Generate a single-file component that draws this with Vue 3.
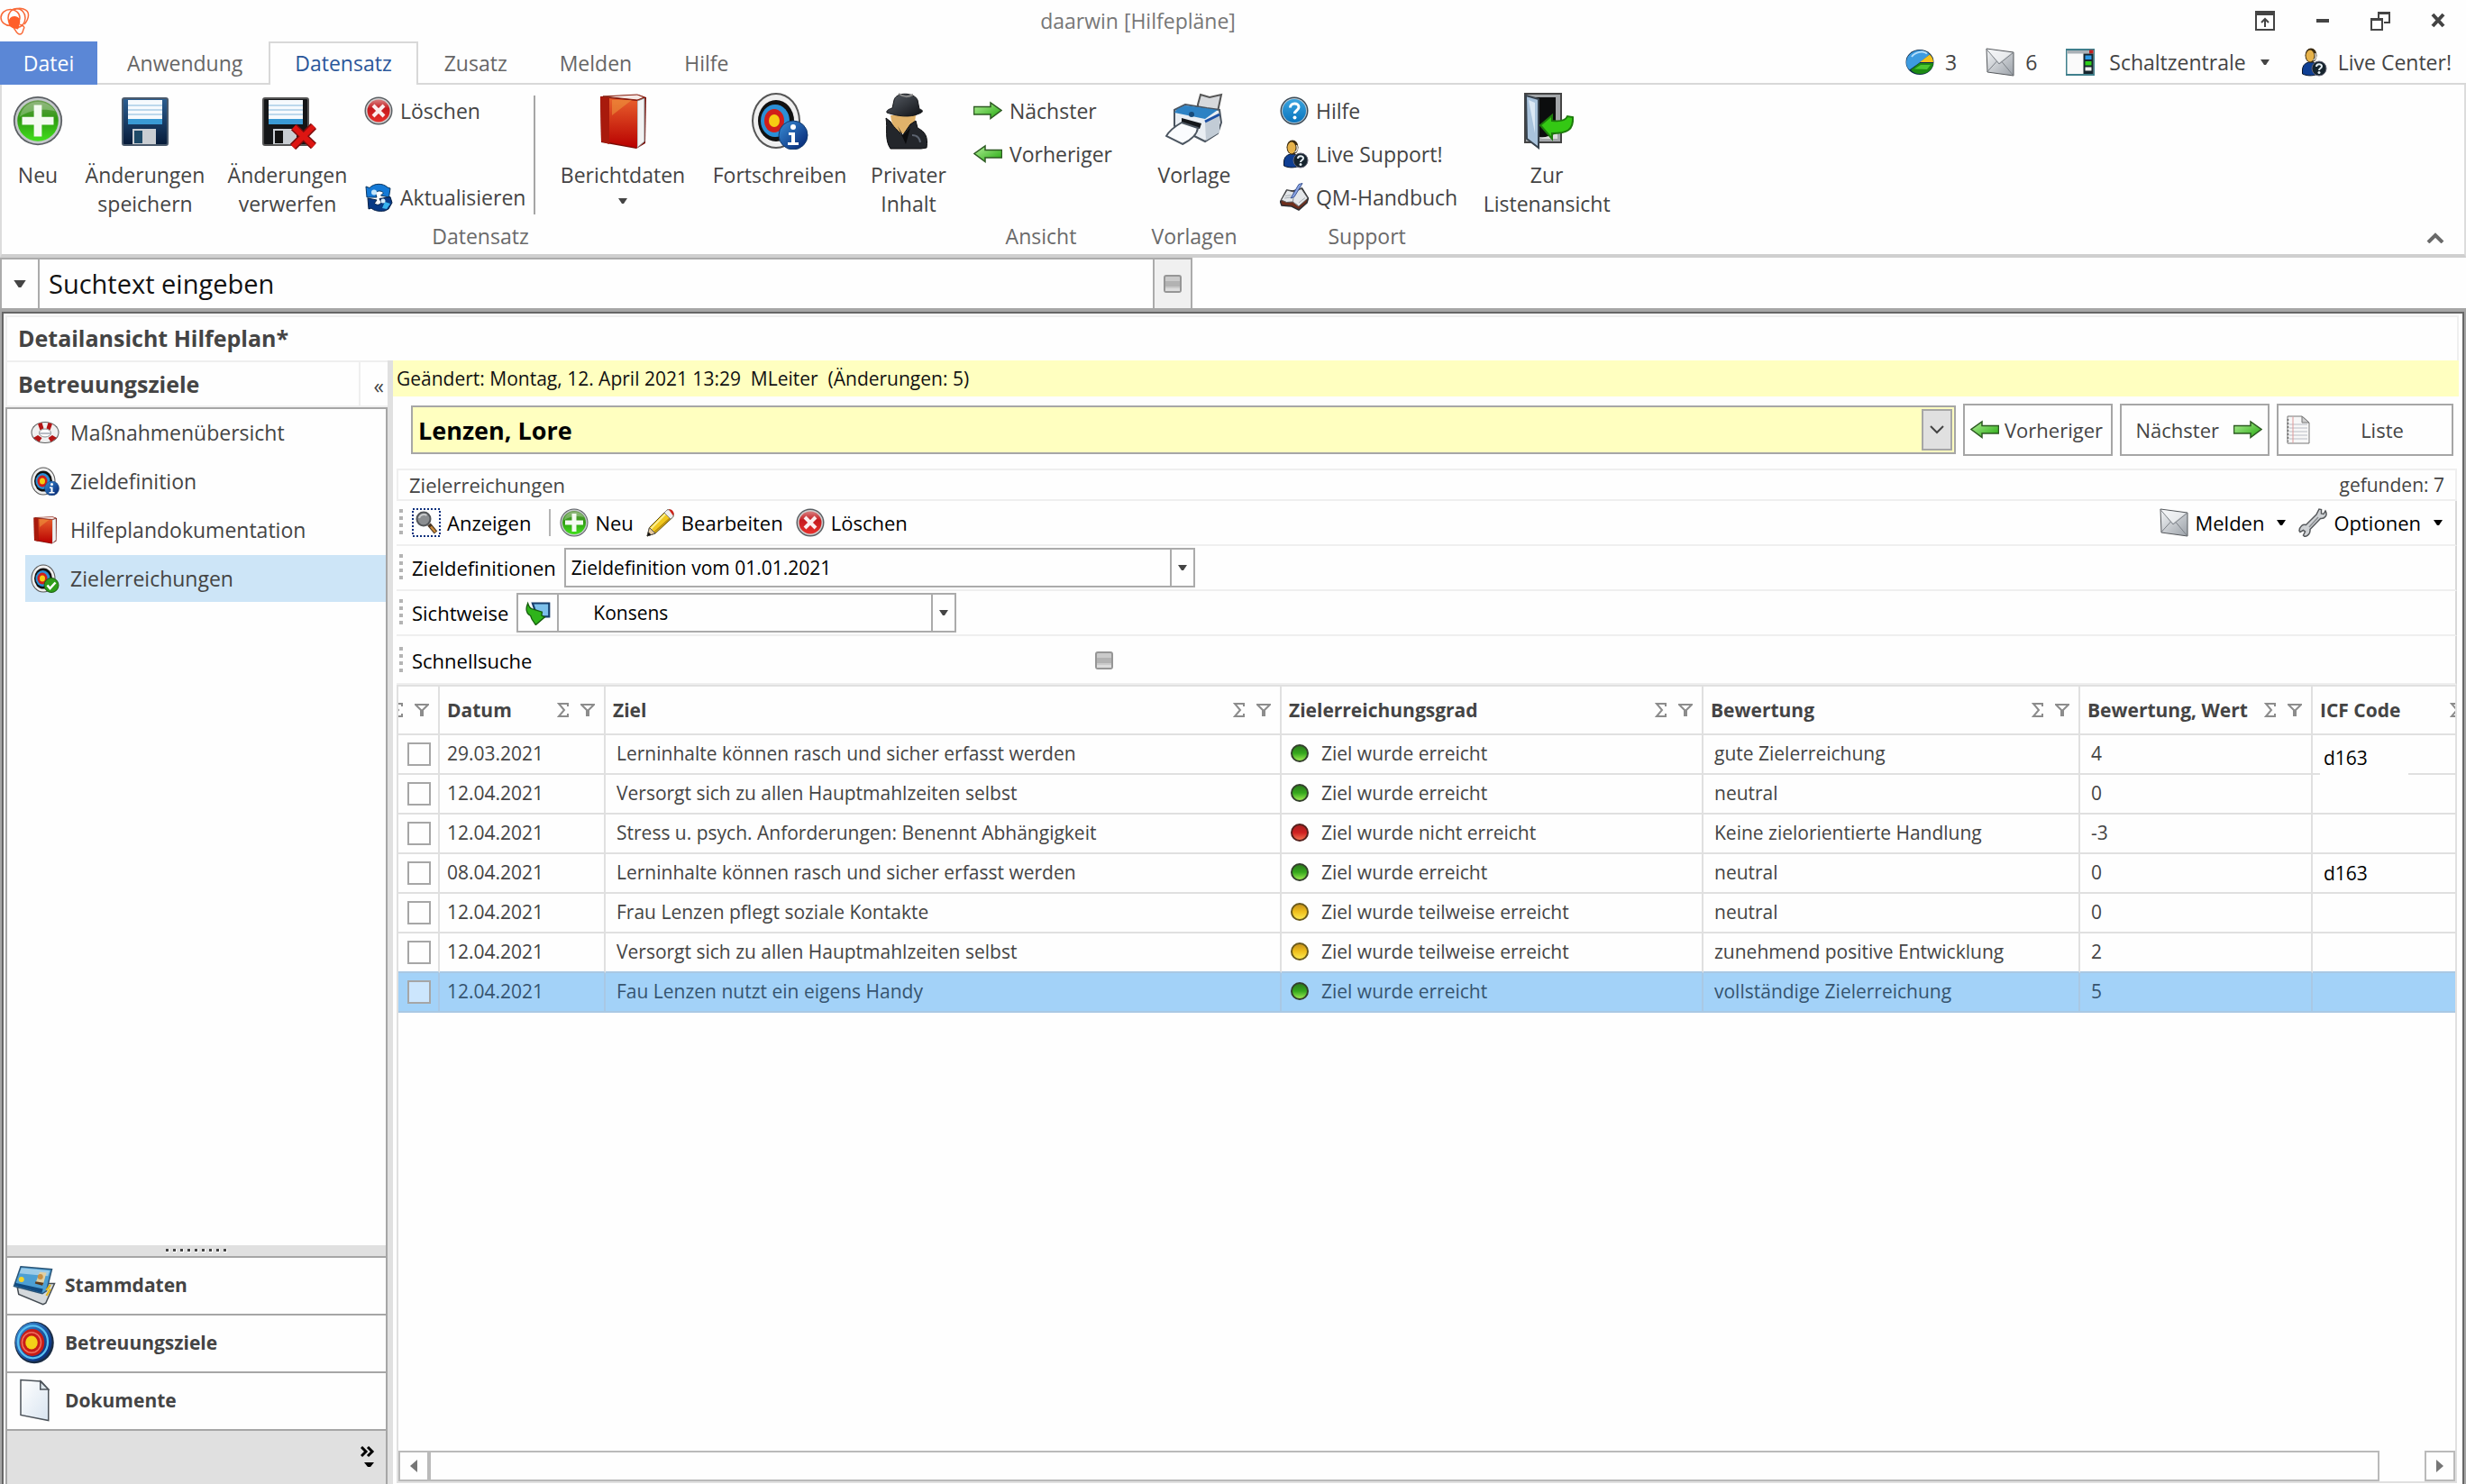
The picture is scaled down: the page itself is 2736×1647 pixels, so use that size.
<template>
  <div class="app">
    <!-- Symbole -->
    <svg class="sprite" aria-hidden="true">
      <defs>
        <linearGradient id="g-green" x1="0" y1="0" x2="0" y2="1">
          <stop offset="0" stop-color="#6f9e55" /><stop offset=".45" stop-color="#2f9a12" /><stop offset="1" stop-color="#41e01c" />
        </linearGradient>
        <linearGradient id="g-red" x1="0" y1="0" x2="0" y2="1">
          <stop offset="0" stop-color="#d98080" /><stop offset=".4" stop-color="#c41a1e" /><stop offset="1" stop-color="#e8302c" />
        </linearGradient>
        <linearGradient id="g-book" x1="0" y1="0" x2="0" y2="1">
          <stop offset="0" stop-color="#e8602c" /><stop offset="1" stop-color="#b80000" />
        </linearGradient>
        <linearGradient id="g-blue" x1="0" y1="0" x2="1" y2="1">
          <stop offset="0" stop-color="#3a8fd8" /><stop offset="1" stop-color="#02206e" />
        </linearGradient>
        <linearGradient id="g-sky" x1="0" y1="0" x2="0" y2="1">
          <stop offset="0" stop-color="#3aa4e0" /><stop offset="1" stop-color="#0a74bc" />
        </linearGradient>
        <linearGradient id="g-metal" x1="0" y1="0" x2="1" y2="1">
          <stop offset="0" stop-color="#f4f6f8" /><stop offset="1" stop-color="#9ba1a8" />
        </linearGradient>
        <linearGradient id="g-arrow" x1="0" y1="0" x2="1" y2="1">
          <stop offset="0" stop-color="#b4f09a" /><stop offset="1" stop-color="#22a80c" />
        </linearGradient>
        <linearGradient id="g-disk" x1="0" y1="0" x2="0" y2="1">
          <stop offset="0" stop-color="#2c5f92" /><stop offset="1" stop-color="#061a38" />
        </linearGradient>
        <linearGradient id="g-paper" x1="0" y1="0" x2="1" y2="1">
          <stop offset="0" stop-color="#ffffff" /><stop offset="1" stop-color="#d8e4f0" />
        </linearGradient>
        <linearGradient id="g-dark" x1="0" y1="0" x2="1" y2="1">
          <stop offset="0" stop-color="#5a6068" /><stop offset="1" stop-color="#0e1014" />
        </linearGradient>
      </defs>

      <symbol id="i-plus" viewBox="0 0 64 64">
        <circle cx="32" cy="32" r="31" fill="#5b5f63" /><circle cx="32" cy="32" r="29" fill="#c4c8cb" />
        <circle cx="32" cy="32" r="26" fill="url(#g-green)" />
        <path d="M9 27C12 14 22 8 32 8s18 5 22 12C40 16 22 18 9 27z" fill="#fff" opacity=".25" />
        <path d="M27 12h10v15h15v10H37v15H27V37H12V27h15z" fill="#f4fbf1" />
      </symbol>
      <symbol id="i-delete" viewBox="0 0 64 64">
        <circle cx="32" cy="32" r="31" fill="#5b5f63" /><circle cx="32" cy="32" r="28" fill="#cfcfcf" />
        <circle cx="32" cy="32" r="25" fill="url(#g-red)" />
        <path d="M20 20l24 24M44 20L20 44" stroke="#fbeeee" stroke-width="8" />
      </symbol>
      <symbol id="i-save" viewBox="0 0 64 64">
        <rect x="7" y="7" width="50" height="52" rx="2" fill="url(#g-disk)" stroke="#4a5a6c" stroke-width="2" />
        <rect x="13" y="9" width="38" height="27" fill="#f6fafd" />
        <path d="M13 15h38M13 20h38M13 25h38" stroke="#bcd8ec" stroke-width="2" />
        <rect x="13" y="30" width="38" height="6" fill="#3a9ad4" />
        <rect x="18" y="41" width="26" height="17" fill="#c9cdd2" /><rect x="20" y="43" width="9" height="14" fill="#1d4a68" />
      </symbol>
      <symbol id="i-discard" viewBox="0 0 64 64">
        <rect x="5" y="7" width="50" height="52" rx="2" fill="#141618" stroke="#555" stroke-width="2" />
        <rect x="11" y="9" width="38" height="27" fill="#f6fafd" />
        <path d="M11 15h38M11 20h38M11 25h38" stroke="#bcd8ec" stroke-width="2" />
        <rect x="11" y="30" width="38" height="6" fill="#3a9ad4" />
        <rect x="16" y="41" width="26" height="17" fill="#c9cdd2" /><rect x="18" y="43" width="9" height="14" fill="#111" />
        <path d="M39 39l22 21M61 38L38 61" stroke="#7c0d0d" stroke-width="9" />
        <path d="M39 39l22 21M61 38L38 61" stroke="#dd1512" stroke-width="6" />
      </symbol>
      <symbol id="i-refresh" viewBox="0 0 64 64">
        <path d="M4 8l8 3C22 0 42 0 52 10l6 2-3 20-18-4 6-6c-6-6-14-5-18 1l3 9H6z" fill="#1479d6" stroke="#0a3560" stroke-width="2" />
        <path d="M62 44l-8 14-8 4c-12 2-24 0-30-6l-6 2-2-24 20 4-5 7c6 6 12 4 15-2l-4-8 24-4z" fill="#083a86" stroke="#061f44" stroke-width="2" />
        <path d="M40 56l6-14 12 4-8 12z" fill="#37b2ee" />
        <circle cx="22" cy="21" r="6" fill="#c4e6fb" /><circle cx="42" cy="40" r="5" fill="#d6ecfa" />
      </symbol>
      <symbol id="i-book" viewBox="0 0 64 64">
        <path d="M7 5l42-2 9 3-1 51-10 6L8 56z" fill="#7a0d06" />
        <path d="M48 10l8-3v48l-8 7z" fill="#f2f2f2" stroke="#8a8a8a" />
        <path d="M7 5l10 1v52l-9-3z" fill="#a81a0c" />
        <path d="M17 7l31 3v52l-31-6z" fill="url(#g-book)" />
        <path d="M20 9h22L20 26z" fill="#f0a040" opacity=".5" />
        <path d="M10 5l38-2 8 3-8 3z" fill="#f6e8e4" stroke="#8a2010" />
      </symbol>
      <symbol id="i-target" viewBox="0 0 64 64">
        <ellipse cx="28" cy="32" rx="27" ry="31" fill="#555" /><ellipse cx="28" cy="32" rx="25" ry="29" fill="#efefef" />
        <ellipse cx="28" cy="32" rx="20" ry="23" fill="#111" /><ellipse cx="27" cy="32" rx="16" ry="18" fill="#2b8fd6" />
        <ellipse cx="26" cy="32" rx="11" ry="13" fill="#d11e1a" /><ellipse cx="26" cy="32" rx="6" ry="7" fill="#f6cc12" />
      </symbol>
      <symbol id="i-target-info" viewBox="0 0 64 64">
        <use href="#i-target" />
        <circle cx="47" cy="48" r="16" fill="url(#g-blue)" stroke="#123a6c" />
        <circle cx="47" cy="39" r="3" fill="#fff" /><path d="M42 45h7v11h4v3H41v-3h4v-8h-3z" fill="#fff" />
      </symbol>
      <symbol id="i-target-ok" viewBox="0 0 64 64">
        <use href="#i-target" />
        <circle cx="46" cy="47" r="16" fill="#2f9e1a" stroke="#1c5c10" stroke-width="2" />
        <path d="M37 47l6 7 12-13" fill="none" stroke="#fff" stroke-width="5" />
      </symbol>
      <symbol id="i-target-blue" viewBox="0 0 64 64">
        <ellipse cx="32" cy="32" rx="29" ry="31" fill="#1a2c44" /><ellipse cx="31" cy="31" rx="27" ry="29" fill="url(#g-blue)" />
        <ellipse cx="30" cy="31" rx="22" ry="24" fill="none" stroke="#58c0f2" stroke-width="3" />
        <ellipse cx="29" cy="32" rx="18" ry="20" fill="#c81c16" /><ellipse cx="28" cy="32" rx="14" ry="15" fill="none" stroke="#f07060" stroke-width="2" />
        <ellipse cx="28" cy="32" rx="9" ry="10" fill="#f4d018" />
      </symbol>
      <symbol id="i-agent" viewBox="0 0 64 64">
        <path d="M12 26c2 14 6 20 14 20s13-8 14-20z" fill="#e0b26a" />
        <path d="M7 29l5 4c5 9 9 9 13 16l9-13 6-4 2 8c8 4 12 9 10 22l-6 1H12C5 53 9 40 7 29z" fill="#23262b" stroke="#0a0b0d" />
        <path d="M20 38l6 10 8-8-5 18z" fill="#0b0c0e" /><path d="M36 48c4 0 8 2 9 8" fill="none" stroke="#5c6470" stroke-width="2" />
        <path d="M16 9c2-9 22-9 26 0l2 10c5 1 4 4 0 5-10 5-25 3-36-1-1-2 2-4 6-5z" fill="url(#g-dark)" stroke="#15171a" />
        <path d="M21 2c6 4 10 4 16 1" fill="none" stroke="#888" stroke-width="2" />
      </symbol>
      <symbol id="i-next" viewBox="0 0 64 64">
        <path d="M1 23h37V14l24 17-24 18v-9H1z" fill="url(#g-arrow)" stroke="#2d5a22" stroke-width="3" />
      </symbol>
      <symbol id="i-prev" viewBox="0 0 64 64">
        <path d="M63 23H26V14L2 31l24 18v-9h37z" fill="url(#g-arrow)" stroke="#2d5a22" stroke-width="3" />
      </symbol>
      <symbol id="i-printer" viewBox="0 0 64 64">
        <path d="M36 14l3-11 10 3 13-3-4 19-22-2z" fill="#d7d9dc" stroke="#555" stroke-width="2" />
        <path d="M10 20l12-6 24 4 14 2 2 14-4 12-14 9-16-8-18-9z" fill="#e9eef3" stroke="#4b5560" stroke-width="2" />
        <path d="M44 34l16-9v20l-15 9z" fill="#c2ccd6" />
        <path d="M13 19l9-4 36 5-14 10-34-7z" fill="#2d82c4" />
        <path d="M44 33l16-8" stroke="#1c50a4" stroke-width="3" />
        <path d="M18 29l22 6-2 6-20-6z" fill="#15181c" />
        <path d="M18 34l18 6c-1 8-7 13-17 18L1 49c4-7 10-11 17-15z" fill="#fafcfe" stroke="#4b5560" stroke-width="2" />
        <circle cx="29" cy="25" r="3" fill="#174a78" />
      </symbol>
      <symbol id="i-help" viewBox="0 0 64 64">
        <circle cx="32" cy="32" r="31" fill="#3c4a56" /><circle cx="32" cy="32" r="28" fill="#b9c8d2" />
        <circle cx="32" cy="32" r="26" fill="url(#g-sky)" />
        <path d="M23 25c0-12 19-12 19-1 0 7-9 7-9 14" fill="none" stroke="#fff" stroke-width="6" /><circle cx="33" cy="47" r="4" fill="#fff" />
      </symbol>
      <symbol id="i-person" viewBox="0 0 64 64">
        <path d="M9 50c0-12 8-18 18-18s16 6 18 14l-2 12c-12 6-26 4-34 0z" fill="#0f3f94" stroke="#08152c" stroke-width="2" />
        <ellipse cx="28" cy="17" rx="13" ry="16" fill="#3a2a10" /><ellipse cx="26" cy="18" rx="9" ry="13" fill="#e6b24a" />
        <path d="M37 12c3 6 2 14-4 16" fill="none" stroke="#ddd" stroke-width="3" />
        <circle cx="46" cy="46" r="16" fill="#16242e" stroke="#667" stroke-width="2" />
        <path d="M40 42c0-7 12-7 12-1 0 5-6 4-6 9" fill="none" stroke="#e6eef4" stroke-width="4" /><circle cx="46" cy="55" r="3" fill="#e6eef4" />
      </symbol>
      <symbol id="i-manual" viewBox="0 0 64 64">
        <path d="M1 42l14-26 14 2 20-6 14 22-3 10-18 16-16-8L4 50z" fill="#6e2e1c" stroke="#2c2f34" stroke-width="3" />
        <path d="M3 38l13-22 15 4 17-7 14 21-20 18-13-10-14 1z" fill="#e4e7ea" stroke="#555" stroke-width="2" />
        <path d="M31 20l-2 22 13 10" fill="none" stroke="#8a9096" stroke-width="2" />
        <path d="M10 34l14-2M12 29l13-2M42 44l14-11" stroke="#aab0b6" stroke-width="2" />
        <path d="M42 3l8-2-18 30-8 3z" fill="#8aa4e6" stroke="#3c5692" stroke-width="2" />
      </symbol>
      <symbol id="i-door" viewBox="0 0 64 64">
        <path d="M8 2h40v54H8z" fill="#a4a7aa" stroke="#444" stroke-width="2" /><path d="M12 6h30v44H12z" fill="#0c0d0e" />
        <path d="M24 52h20v-6z" fill="#ddd" />
        <path d="M9 4l14 4v54L10 52z" fill="#a9c3dc" stroke="#38434e" stroke-width="2" /><path d="M12 9l7 3v34z" fill="#dbe8f4" />
        <path d="M25 37l13-11v6c8 1 15 0 17-5l6 1c1 14-6 18-23 18v6z" fill="#34c814" stroke="#1d7a0c" stroke-width="2" />
      </symbol>
      <symbol id="i-pie" viewBox="0 0 64 64">
        <ellipse cx="32" cy="32" rx="31" ry="28" fill="#0e2c4a" /><path d="M30 34L9 49A29 26 0 0 1 54 15z" fill="#3d9be0" />
        <path d="M32 32L54 15c5 5 8 11 8 17H36z" fill="#f4c21a" /><path d="M31 34h31c-1 15-14 24-29 24-10 0-17-4-21-9z" fill="#1c8a12" />
        <path d="M20 47l14-9h22l-8 10z" fill="#4cc830" /><path d="M14 20c8-11 26-14 34-7" stroke="#b4defa" stroke-width="4" fill="none" />
      </symbol>
      <symbol id="i-mail" viewBox="0 0 64 64">
        <path d="M2 2l60 8v52L4 54z" fill="url(#g-metal)" stroke="#55585c" stroke-width="2" />
        <path d="M2 3l28 33L61 11M4 53l21-23M61 61L36 31" fill="none" stroke="#7d8288" stroke-width="2" />
        <path d="M4 4l26 29L58 11z" fill="#f6f8fa" opacity=".7" />
      </symbol>
      <symbol id="i-panel" viewBox="0 0 64 64">
        <rect x="1" y="4" width="62" height="56" fill="#fafafa" stroke="#3f7f8c" stroke-width="4" />
        <rect x="3" y="6" width="58" height="7" fill="#a9b0b6" /><rect x="52" y="5" width="9" height="8" fill="#c02020" />
        <rect x="39" y="13" width="22" height="45" fill="#16262e" />
        <path d="M43 17h14v9H43z" fill="#2d9be6" /><path d="M43 30h14v9H43z" fill="#2fd01a" /><path d="M43 43h14v8H43z" fill="#f0f0f0" />
      </symbol>
      <symbol id="i-ring" viewBox="0 0 64 64">
        <ellipse cx="32" cy="32" rx="31" ry="24" fill="#5c5c5c" /><ellipse cx="32" cy="32" rx="29" ry="22" fill="#f0f0f0" />
        <path d="M16 13l9-3 4 13-8 4zM48 13l-9-3-4 13 8 4zM6 44l10-6 9 6-6 9zM58 44l-10-6-9 6 6 9z" fill="#b41414" />
        <ellipse cx="32" cy="33" rx="13" ry="9" fill="#fdfdfd" stroke="#8a8a8a" stroke-width="2" />
        <path d="M20 34h24" stroke="#b8bcc4" stroke-width="4" />
      </symbol>
      <symbol id="i-magnifier" viewBox="0 0 64 64">
        <rect x="2" y="2" width="60" height="60" fill="none" stroke="#0b2f7c" stroke-width="4" stroke-dasharray="4 4" />
        <path d="M38 36l15 18" stroke="#4a3420" stroke-width="9" /><path d="M42 41l10 12" stroke="#c88a3a" stroke-width="5" />
        <circle cx="26" cy="24" r="15" fill="#8b8e91" stroke="#54575a" stroke-width="4" /><path d="M16 22c2-8 12-10 17-6" stroke="#c8cacc" stroke-width="4" fill="none" />
      </symbol>
      <symbol id="i-pencil" viewBox="0 0 64 64">
        <path d="M2 62l5-19L45 5c6-6 20 6 14 15L20 56z" fill="#f0c81e" stroke="#5a4a12" stroke-width="2" />
        <path d="M10 46L46 9" stroke="#fbee90" stroke-width="4" /><path d="M17 54L55 20" stroke="#b4880c" stroke-width="3" />
        <path d="M45 5c6-6 20 6 14 15l-5 4-14-14z" fill="#eee" stroke="#888" stroke-width="2" /><path d="M50 3c6-2 14 6 10 14z" fill="#cc2218" />
        <path d="M2 62l5-19 13 13z" fill="#e4c8a0" stroke="#555" stroke-width="2" /><path d="M2 62l3-9 6 6z" fill="#111" />
      </symbol>
      <symbol id="i-wrench" viewBox="0 0 64 64">
        <path d="M40 14l6-12 5 1v9l5 1 4-7c6 10-2 18-11 17L26 47c1 8-4 15-12 16l-3-3 4-8-4-3-7 4-2-3c1-10 8-15 15-13l22-22z" fill="#cfd2d5" stroke="#56595c" stroke-width="3" />
        <path d="M24 42l20-22" stroke="#8a8d90" stroke-width="3" />
      </symbol>
      <symbol id="i-switch" viewBox="0 0 64 64">
        <path d="M18 8h42v34H30z" fill="#7cc0ea" stroke="#173f6e" stroke-width="5" />
        <path d="M6 8C0 22 2 34 13 40l3 8 10 15 23-20-8-4 1-9-26-8C11 20 8 15 6 8z" fill="#2fb41a" stroke="#145c0c" stroke-width="3" />
      </symbol>
      <symbol id="i-list" viewBox="0 0 64 64">
        <path d="M8 2h32l16 14v46H8z" fill="#f7f7f7" stroke="#777" stroke-width="2" /><path d="M40 2v14h16z" fill="#cfcfcf" stroke="#777" stroke-width="2" />
        <path d="M12 20h40M12 28h40M12 36h40M12 44h40M12 52h40" stroke="#b9bcc4" stroke-width="2" /><path d="M20 3v58" stroke="#e09a9a" stroke-width="2" />
        <path d="M9 8v50" stroke="#666" stroke-width="3" stroke-dasharray="4 4" />
      </symbol>
      <symbol id="i-cards" viewBox="0 0 64 64">
        <path d="M7 36l42-6 13 0-13 29-4 2L9 46z" fill="#d5d9dc" stroke="#444b52" stroke-width="2" />
        <path d="M12 5l46 4-8 32-6 4L2 34z" fill="#4c9fd4" stroke="#2c5678" stroke-width="2" />
        <path d="M13 7l42 4-3 8-42-4z" fill="#9ccbe8" /><path d="M4 29l41 9-2 6L3 33z" fill="#104a80" />
        <path d="M40 13l10 1-5 18-11-3z" fill="#e2cfa0" /><circle cx="41" cy="20" r="4" fill="#c89044" /><circle cx="13" cy="24" r="4" fill="#f4d428" />
        <path d="M34 27l12 2-2 4-11-3z" fill="#5a3a1c" /><path d="M50 40l6-8M50 48l6-10" stroke="#e2b820" stroke-width="3" />
      </symbol>
      <symbol id="i-doc" viewBox="0 0 64 64">
        <path d="M12 2l30 2 11 12v46l-41-8z" fill="url(#g-paper)" stroke="#4c535a" stroke-width="2" /><path d="M41 4v12h12z" fill="#dce6ec" stroke="#4c535a" stroke-width="2" />
      </symbol>
      <symbol id="i-logo" viewBox="0 0 66 62">
        <g fill="none" stroke="#f96a38" stroke-width="3">
          <ellipse cx="23" cy="23" rx="21" ry="18" />
          <ellipse cx="37" cy="24" rx="19" ry="21" />
          <path d="M30 6C44-1 64 4 63 18c0 8-4 14-9 20M30 46c4 2 6 14 14 14s6-9 9-13c3-5-6-7-9-9" />
        </g>
        <path d="M32 20c10 0 14 8 12 16-2 6-2 10-4 13-6-2-20-2-21-14 0-9 5-15 13-15z" fill="#ff5f2a" />
      </symbol>
      <symbol id="i-sigma" viewBox="0 0 14 16">
        <path d="M12 4V1H2l6 7-6 7h10v-3" fill="none" stroke="#8c8c8c" stroke-width="2" />
      </symbol>
      <symbol id="i-filter" viewBox="0 0 16 16">
        <path d="M1 2h14L9 8v6H7V8z" fill="none" stroke="#8c8c8c" stroke-width="2" />
      </symbol>
      <symbol id="i-caret" viewBox="0 0 10 6"><path d="M0 0h10L6 6H4z" fill="currentColor" /></symbol>
      <symbol id="i-block" viewBox="0 0 20 20">
        <rect x="1" y="1" width="18" height="18" rx="2" fill="#cacaca" stroke="#969696" stroke-width="2" />
        <path d="M2 7h16v6H2z" fill="#b2b2b2" /><path d="M2 15h16v3H2z" fill="#dcdcdc" />
      </symbol>
    </svg>

    <header class="titlebar">
      <svg class="logo"><use href="#i-logo" /></svg>
      <h1>daarwin [Hilfepläne]</h1>
      <div class="window-buttons">
        <button aria-label="Menüband"><svg viewBox="0 0 22 22"><path d="M1 1h20v20H1z" fill="none" stroke="#444" stroke-width="2" /><path d="M1 1h20v4H1z" fill="#444" /><path d="M11 18V9M7 13l4-4 4 4" fill="none" stroke="#444" stroke-width="2" /></svg></button>
        <button aria-label="Minimieren"><svg viewBox="0 0 22 22"><path d="M4 9h14v4H4z" fill="#444" /></svg></button>
        <button aria-label="Wiederherstellen"><svg viewBox="0 0 22 22"><path d="M9 8V2h12v11h-6" fill="none" stroke="#444" stroke-width="2" /><path d="M8 1h14v3H8zM0 8h14v3H0z" fill="#444" /><path d="M1 9h12v12H1z" fill="none" stroke="#444" stroke-width="2" /></svg></button>
        <button aria-label="Schließen"><svg viewBox="0 0 22 22"><path d="M5 4l12 13M17 4L5 17" stroke="#444" stroke-width="4" /></svg></button>
      </div>
    </header>

    <nav class="tabs">
      <button
        v-for="tab in tabs"
        :key="tab"
        class="tab"
        :class="{ file: tab === 'Datei', active: tab === activeTab }"
        @click="activeTab = tab"
      >{{ tab }}</button>
      <div class="quick">
        <button><svg class="ico"><use href="#i-pie" /></svg>3</button>
        <button><svg class="ico"><use href="#i-mail" /></svg>6</button>
        <button class="center"><svg class="ico"><use href="#i-panel" /></svg>Schaltzentrale<svg class="caret"><use href="#i-caret" /></svg></button>
        <button><svg class="ico"><use href="#i-person" /></svg>Live Center!</button>
      </div>
    </nav>

    <section class="ribbon">
      <div v-for="group in groups" :key="group.id" class="group">
        <div class="group-body">
          <template v-for="(item, i) in group.items" :key="i">
            <i v-if="item.sep" class="ribbon-sep"></i>
            <div v-else-if="item.stack" class="stack" :class="{ spread: item.spread }">
              <button v-for="s in item.stack" :key="s.text" class="small"><svg class="ico"><use :href="'#' + s.icon" /></svg>{{ s.text }}</button>
            </div>
            <button v-else class="big" :class="item.size">
              <span class="big-ico"><svg :class="{ less: item.icon === 'i-plus' }"><use :href="'#' + item.icon" /></svg></span>
              <span v-for="line in item.lines" :key="line">{{ line }}</span>
              <svg v-if="item.menu" class="caret"><use href="#i-caret" /></svg>
            </button>
          </template>
        </div>
        <div class="group-label">{{ group.label }}</div>
      </div>
      <button class="collapse" aria-label="Menüband einklappen"><svg viewBox="0 0 20 12"><path d="M2 11l8-8 8 8" fill="none" stroke="#6a6a6a" stroke-width="4" /></svg></button>
    </section>

    <div class="search">
      <button class="search-menu" aria-label="Suchoptionen"><svg class="caret wide"><use href="#i-caret" /></svg></button>
      <input type="text" placeholder="Suchtext eingeben" aria-label="Suchtext eingeben" />
      <button class="search-go" aria-label="Suchen"><svg class="block"><use href="#i-block" /></svg></button>
    </div>

    <main class="window">
      <h2 class="view-title">Detailansicht Hilfeplan*</h2>
      <div class="columns">
        <aside class="sidebar">
          <div class="side-head">
            <h3>Betreuungsziele</h3>
            <button aria-label="Einklappen">«</button>
          </div>
          <ul class="side-list">
            <li v-for="entry in entries" :key="entry.text">
              <a href="#" :class="{ active: entry.text === 'Zielerreichungen' }" @click.prevent><svg><use :href="'#' + entry.icon" /></svg>{{ entry.text }}</a>
            </li>
          </ul>
          <div class="grip"><i v-for="n in 9" :key="n"></i></div>
          <button v-for="area in areas" :key="area.text" class="area"><svg><use :href="'#' + area.icon" /></svg>{{ area.text }}</button>
          <div class="side-foot">
            <button aria-label="Weitere Bereiche">
              <svg viewBox="0 0 16 24"><path d="M1 1l5 5-5 5M8 1l5 5-5 5" fill="none" stroke="#000" stroke-width="3" /><path d="M4 18h11l-4 5H8z" /></svg>
            </button>
          </div>
        </aside>

        <section class="content">
          <p class="changed">Geändert: Montag, 12. April 2021 13:29&nbsp; MLeiter&nbsp; (Änderungen: 5)</p>

          <div class="record">
            <div class="person">
              <select aria-label="Person"><option>Lenzen, Lore</option></select>
              <span class="person-arrow"><svg viewBox="0 0 16 10"><path d="M1 1l7 7 7-7" fill="none" stroke="#444" stroke-width="2" /></svg></span>
            </div>
            <button><svg class="ico"><use href="#i-prev" /></svg>Vorheriger</button>
            <button class="next">Nächster<svg class="ico"><use href="#i-next" /></svg></button>
            <button class="list"><svg class="ico"><use href="#i-list" /></svg><span>Liste</span></button>
          </div>

          <div class="box">
            <div class="box-head"><h4>Zielerreichungen</h4><span>gefunden: 7</span></div>

            <div class="bar tools">
              <i class="handle"></i>
              <button><svg class="ico"><use href="#i-magnifier" /></svg>Anzeigen</button>
              <i class="tool-sep"></i>
              <button><svg class="ico"><use href="#i-plus" /></svg>Neu</button>
              <button><svg class="ico"><use href="#i-pencil" /></svg>Bearbeiten</button>
              <button><svg class="ico"><use href="#i-delete" /></svg>Löschen</button>
              <div class="tools-right">
                <button><svg class="ico"><use href="#i-mail" /></svg>Melden<svg class="caret"><use href="#i-caret" /></svg></button>
                <button><svg class="ico"><use href="#i-wrench" /></svg>Optionen<svg class="caret"><use href="#i-caret" /></svg></button>
              </div>
            </div>

            <div class="bar">
              <i class="handle"></i>
              <label for="def">Zieldefinitionen</label>
              <div class="combo long">
                <select id="def"><option>Zieldefinition vom 01.01.2021</option></select>
                <span class="combo-arrow"><svg class="caret"><use href="#i-caret" /></svg></span>
              </div>
            </div>

            <div class="bar">
              <i class="handle"></i>
              <label for="sicht">Sichtweise</label>
              <div class="combo">
                <button class="combo-ico" aria-label="Sichtweise wechseln"><svg><use href="#i-switch" /></svg></button>
                <select id="sicht" class="indent"><option>Konsens</option></select>
                <span class="combo-arrow"><svg class="caret"><use href="#i-caret" /></svg></span>
              </div>
            </div>

            <div class="bar quicksearch">
              <i class="handle"></i>
              <label for="quick">Schnellsuche</label>
              <input id="quick" type="text" />
              <button aria-label="Schnellsuche starten"><svg class="block"><use href="#i-block" /></svg></button>
            </div>

            <div class="grid">
              <table>
                <colgroup>
                  <col class="c-check" /><col class="c-date" /><col /><col class="c-grade" /><col class="c-rating" /><col class="c-value" /><col class="c-icf" />
                </colgroup>
                <thead>
                  <tr>
                    <th v-for="col in columns" :key="col.id" :class="col.id">
                      <div class="th">
                        <span>{{ col.title }}</span>
                        <svg class="sigma"><use href="#i-sigma" /></svg>
                        <svg v-if="col.id !== 'icf'" class="filter"><use href="#i-filter" /></svg>
                      </div>
                    </th>
                  </tr>
                </thead>
                <tbody>
                  <tr v-for="(row, i) in rows" :key="i" :class="{ selected: i === 6 }">
                    <td class="check"><input type="checkbox" :aria-label="row.goal" /></td>
                    <td class="date">{{ row.date }}</td>
                    <td>{{ row.goal }}</td>
                    <td class="grade"><i class="light" :class="row.light"></i>{{ grades[row.light] }}</td>
                    <td>{{ row.rating }}</td>
                    <td>{{ row.value }}</td>
                    <td class="code"><span v-if="row.icf" :class="{ patch: i === 0 }">{{ row.icf }}</span></td>
                  </tr>
                </tbody>
              </table>
              <div class="scroll">
                <button aria-label="Nach links"><svg viewBox="0 0 8 14"><path d="M8 0v14L0 7z" fill="#767676" /></svg></button>
                <div class="thumb"></div>
                <button aria-label="Nach rechts"><svg viewBox="0 0 8 14"><path d="M0 0v14l8-7z" fill="#767676" /></svg></button>
              </div>
            </div>
          </div>
        </section>
      </div>
    </main>
  </div>
</template>

<script setup>
import { ref } from 'vue'

const tabs = ['Datei', 'Anwendung', 'Datensatz', 'Zusatz', 'Melden', 'Hilfe']
const activeTab = ref('Datensatz')

const groups = [
  {
    id: 'record',
    label: 'Datensatz',
    items: [
      { icon: 'i-plus', lines: ['Neu'], size: 'w-s' },
      { icon: 'i-save', lines: ['Änderungen', 'speichern'], size: 'w-l' },
      { icon: 'i-discard', lines: ['Änderungen', 'verwerfen'], size: 'w-l' },
      { spread: true, stack: [{ icon: 'i-delete', text: 'Löschen' }, { icon: 'i-refresh', text: 'Aktualisieren' }] },
      { sep: true },
      { icon: 'i-book', lines: ['Berichtdaten'], size: 'w-xl', menu: true },
      { icon: 'i-target-info', lines: ['Fortschreiben'], size: 'w-xl' },
      { icon: 'i-agent', lines: ['Privater', 'Inhalt'], size: 'w-m' }
    ]
  },
  { id: 'view', label: 'Ansicht', items: [{ stack: [{ icon: 'i-next', text: 'Nächster' }, { icon: 'i-prev', text: 'Vorheriger' }] }] },
  { id: 'templates', label: 'Vorlagen', items: [{ icon: 'i-printer', lines: ['Vorlage'], size: 'w-l' }] },
  {
    id: 'support',
    label: 'Support',
    items: [{ stack: [{ icon: 'i-help', text: 'Hilfe' }, { icon: 'i-person', text: 'Live Support!' }, { icon: 'i-manual', text: 'QM-Handbuch' }] }]
  },
  { id: 'list', label: '', items: [{ icon: 'i-door', lines: ['Zur', 'Listenansicht'], size: 'w-xl' }] }
]

const entries = [
  { icon: 'i-ring', text: 'Maßnahmenübersicht' },
  { icon: 'i-target-info', text: 'Zieldefinition' },
  { icon: 'i-book', text: 'Hilfeplandokumentation' },
  { icon: 'i-target-ok', text: 'Zielerreichungen' }
]

const areas = [
  { icon: 'i-cards', text: 'Stammdaten' },
  { icon: 'i-target-blue', text: 'Betreuungsziele' },
  { icon: 'i-doc', text: 'Dokumente' }
]

const columns = [
  { id: 'check', title: '' },
  { id: 'date', title: 'Datum' },
  { id: 'goal', title: 'Ziel' },
  { id: 'grade', title: 'Zielerreichungsgrad' },
  { id: 'rating', title: 'Bewertung' },
  { id: 'value', title: 'Bewertung, Wert' },
  { id: 'icf', title: 'ICF Code' }
]

const grades = {
  green: 'Ziel wurde erreicht',
  red: 'Ziel wurde nicht erreicht',
  yellow: 'Ziel wurde teilweise erreicht'
}

const rows = [
  { date: '29.03.2021', goal: 'Lerninhalte können rasch und sicher erfasst werden', light: 'green', rating: 'gute Zielerreichung', value: '4', icf: 'd163' },
  { date: '12.04.2021', goal: 'Versorgt sich zu allen Hauptmahlzeiten selbst', light: 'green', rating: 'neutral', value: '0' },
  { date: '12.04.2021', goal: 'Stress u. psych. Anforderungen: Benennt Abhängigkeit', light: 'red', rating: 'Keine zielorientierte Handlung', value: '-3' },
  { date: '08.04.2021', goal: 'Lerninhalte können rasch und sicher erfasst werden', light: 'green', rating: 'neutral', value: '0', icf: 'd163' },
  { date: '12.04.2021', goal: 'Frau Lenzen pflegt soziale Kontakte', light: 'yellow', rating: 'neutral', value: '0' },
  { date: '12.04.2021', goal: 'Versorgt sich zu allen Hauptmahlzeiten selbst', light: 'yellow', rating: 'zunehmend positive Entwicklung', value: '2' },
  { date: '12.04.2021', goal: 'Fau Lenzen nutzt ein eigens Handy', light: 'green', rating: 'vollständige Zielerreichung', value: '5' }
]
</script>

<style>
body {
  margin: 0;
  background: #fefefe;
}
</style>

<style scoped>
.app {
  display: flex;
  flex-direction: column;
  min-height: 100vh;
  font-family: 'Open Sans', 'Noto Sans', sans-serif;
  font-size: 23px;
  line-height: 32px;
  color: #444;
  background: #fefefe;
}

* {
  box-sizing: border-box;
}

h1, h2, h3, h4, p, ul {
  margin: 0;
  padding: 0;
  font-size: inherit;
  font-weight: normal;
}

ul {
  list-style: none;
}

button, select, input {
  margin: 0;
  padding: 0;
  border: 0;
  border-radius: 0;
  background: none;
  font: inherit;
  color: inherit;
  outline: none;
}

select {
  appearance: none;
}

svg {
  display: block;
  flex: none;
}

.sprite {
  position: absolute;
  width: 0;
  height: 0;
}

.ico {
  width: 32px;
  height: 32px;
}

.caret {
  width: 10px;
  height: 6px;
}

.caret.wide {
  width: 14px;
  height: 8px;
}

.block {
  width: 20px;
  height: 20px;
}

/* Titelzeile */
.titlebar {
  display: flex;
  align-items: center;
  height: 46px;
}

.logo {
  width: 33px;
  height: 31px;
}

.titlebar h1 {
  flex: 1;
  padding-right: 10px;
  text-align: center;
  color: #777;
}

.window-buttons {
  display: flex;
  gap: 42px;
  padding-right: 20px;
}

.window-buttons svg {
  width: 22px;
  height: 22px;
}

/* Reiter */
.tabs {
  display: flex;
  height: 48px;
  border-bottom: 2px solid #d8d8d8;
}

.tab {
  height: 48px;
  padding: 0 27px 2px;
  border: 2px solid transparent;
  border-bottom: 0;
  color: #666;
}

.tab.file {
  width: 108px;
  margin-right: 4px;
  padding: 0 0 2px;
  background: #5b87d6;
  border-color: #5b87d6;
  color: #fff;
}

.tab.active {
  border-color: #d8d8d8;
  background: #fefefe;
  color: #2b579a;
}

.quick {
  display: flex;
  align-items: center;
  gap: 32px;
  margin-left: auto;
  padding-right: 16px;
}

.quick button {
  display: flex;
  align-items: center;
  gap: 12px;
}

.quick .center {
  gap: 16px;
}

/* Menüband */
.ribbon {
  display: flex;
  height: 192px;
  border-left: 2px solid #dcdcdc;
  border-right: 2px solid #dcdcdc;
  border-bottom: 4px solid #cfcfcf;
}

.group-body {
  display: flex;
  height: 152px;
}

.group-label {
  text-align: center;
  color: #6a6a6a;
}

.big {
  display: flex;
  flex-direction: column;
  align-items: center;
  padding-top: 8px;
}

.big-ico {
  display: flex;
  align-items: center;
  justify-content: center;
  height: 64px;
  margin-bottom: 12px;
}

.big-ico svg {
  width: 64px;
  height: 64px;
}

.big-ico svg.less {
  width: 56px;
  height: 56px;
}

.big .caret {
  margin-top: 10px;
}

.w-s { width: 80px; }
.w-m { width: 112px; }
.w-l { width: 158px; }
.w-xl { width: 174px; }

.stack {
  display: flex;
  flex-direction: column;
  padding: 5px 12px 3px 16px;
}

.stack.spread {
  justify-content: space-between;
  width: 194px;
  padding: 5px 0 3px 6px;
}

.small {
  display: flex;
  align-items: center;
  gap: 8px;
  height: 48px;
  white-space: nowrap;
}

.ribbon-sep {
  width: 2px;
  height: 132px;
  margin: 12px 10px 0 0;
  background: #a6a6a6;
}

.collapse {
  align-self: flex-end;
  margin: 0 22px 12px auto;
}

.collapse svg {
  width: 20px;
  height: 12px;
}

/* Suche */
.search {
  display: flex;
  width: 1323px;
  max-width: 100%;
  height: 56px;
  border: 2px solid #ababab;
  border-bottom: 0;
}

.search input {
  flex: 1;
  padding-left: 10px;
  font-size: 29px;
}

.search input::placeholder {
  color: #111;
  opacity: 1;
}

.search-menu,
.search-go {
  display: flex;
  align-items: center;
  justify-content: center;
  width: 42px;
  border-right: 2px solid #ababab;
}

.search-go {
  border-right: 0;
  border-left: 2px solid #ababab;
  background: #f0f0f0;
}

/* Fenster */
.window {
  display: flex;
  flex-direction: column;
  flex: 1;
  padding: 0 4px 0 2px;
  border: 2px solid #666;
  border-bottom: 0;
  outline: 4px solid #a6a6a6;
  outline-offset: 0;
  margin: 4px 2px 0;
  overflow: hidden;
}

.view-title {
  margin-top: 2px;
  padding: 7px 12px 9px;
  border: 2px solid #efefef;
  border-bottom: 0;
  font-size: 25px;
  font-weight: bold;
}

.columns {
  display: flex;
  flex: 1;
}

.sidebar {
  display: flex;
  flex-direction: column;
  width: 430px;
  flex: none;
  border-right: 6px solid #e0e0e0;
}

.side-head {
  display: flex;
  border: 2px solid #efefef;
  border-right: 0;
  font-size: 25px;
}

.side-head h3 {
  flex: 1;
  padding: 8px 12px;
  font-weight: bold;
}

.side-head button {
  width: 32px;
  padding: 4px 4px 0 0;
  border-left: 2px solid #efefef;
  font-size: 23px;
  text-align: right;
}

.side-list {
  display: flex;
  flex-direction: column;
  flex: 1;
  gap: 2px;
  padding-left: 20px;
  border: 2px solid #a6a6a6;
  border-bottom: 0;
}

.side-list a {
  display: flex;
  align-items: center;
  gap: 12px;
  height: 52px;
  padding-left: 6px;
  color: inherit;
  text-decoration: none;
}

.side-list a.active {
  background: #cde5f7;
}

.side-list svg {
  width: 32px;
  height: 32px;
}

.grip {
  display: flex;
  justify-content: center;
  gap: 4px;
  height: 14px;
  padding-top: 4px;
  border: 2px solid #a6a6a6;
  border-top: 0;
  background: #e0e0e0;
}

.grip i {
  width: 4px;
  height: 4px;
  background: #444;
  border-right: 1px solid #fff;
  border-bottom: 1px solid #fff;
}

.area {
  display: flex;
  align-items: center;
  gap: 10px;
  height: 64px;
  padding: 0 0 2px 6px;
  border: 2px solid #a6a6a6;
  border-top: 0;
  font-size: 21px;
  font-weight: bold;
}

.area svg {
  width: 48px;
  height: 48px;
}

.side-foot {
  display: flex;
  align-items: flex-start;
  justify-content: flex-end;
  height: 59px;
  padding: 17px 12px 0;
  border: solid #a6a6a6;
  border-width: 0 2px;
  background: #e0e0e0;
}

.side-foot svg {
  width: 16px;
  height: 24px;
}

/* Inhalt */
.content {
  display: flex;
  flex-direction: column;
  flex: 1;
  min-width: 0;
  font-size: 22px;
}

.changed {
  padding: 4px;
  background: #ffffc0;
  color: #111;
  font-size: 21px;
}

.record {
  display: flex;
  align-items: center;
  gap: 8px;
  padding: 8px 6px 14px 20px;
}

.person {
  position: relative;
  flex: 1;
  height: 54px;
  border: 2px solid #a6a6a6;
  background: #ffffc0;
}

.person select {
  width: 100%;
  height: 100%;
  padding: 2px 0 0 6px;
  color: #000;
  font-size: 27px;
  font-weight: bold;
}

.person-arrow {
  position: absolute;
  top: 2px;
  right: 2px;
  bottom: 2px;
  display: flex;
  align-items: center;
  justify-content: center;
  width: 34px;
  border: 2px solid #a6a6a6;
  background: #e0e0e0;
  pointer-events: none;
}

.person-arrow svg {
  width: 16px;
  height: 10px;
}

.record button {
  display: flex;
  align-items: center;
  gap: 6px;
  width: 166px;
  height: 58px;
  padding: 0 6px;
  border: 2px solid #a6a6a6;
}

.record .next {
  justify-content: flex-end;
  gap: 16px;
}

.record .list {
  width: 196px;
}

.list span {
  flex: 1;
  text-align: center;
}

.box {
  display: flex;
  flex-direction: column;
  flex: 1;
  margin: 0 2px 1px 4px;
}

.box-head {
  display: flex;
  justify-content: space-between;
  padding: 0 12px;
  border: 2px solid #efefef;
}

.box-head span {
  font-size: 21px;
}

.bar {
  display: flex;
  align-items: center;
  height: 50px;
  padding-left: 3px;
  border-bottom: 2px solid #efefef;
  border-right: 2px solid #d8d8d8;
  color: #000;
}

.handle {
  width: 4px;
  height: 30px;
  margin-right: 10px;
  background: repeating-linear-gradient(#b4b4b4 0 4px, transparent 4px 8px);
}

.tools button {
  display: flex;
  align-items: center;
  gap: 7px;
  margin-right: 14px;
}

.tool-sep {
  width: 2px;
  height: 30px;
  margin: 0 10px 0 6px;
  background: #b4b4b4;
}

.tools-right {
  display: flex;
  margin-left: auto;
}

.tools-right .caret {
  margin-left: 7px;
}

.bar label {
  margin-right: 9px;
}

.combo {
  display: flex;
  width: 488px;
  height: 44px;
  border: 2px solid #ababab;
}

.combo.long {
  width: 700px;
}

.combo select {
  flex: 1;
  padding-left: 6px;
  font-size: 21px;
}

.combo select.indent {
  padding-left: 38px;
}

.combo-ico {
  display: flex;
  align-items: center;
  justify-content: center;
  width: 45px;
  border-right: 2px solid #ababab;
}

.combo-ico svg {
  width: 28px;
  height: 28px;
}

.combo-arrow {
  display: flex;
  align-items: center;
  justify-content: center;
  width: 26px;
  border-left: 2px solid #ababab;
  color: #444;
}

.quicksearch {
  height: 54px;
  padding-top: 2px;
}

.quicksearch input {
  width: 616px;
}

/* Tabelle */
.grid {
  display: flex;
  flex-direction: column;
  flex: 1;
  border: 2px solid #e0e0e0;
}

table {
  width: 100%;
  table-layout: fixed;
  border-spacing: 0;
}

.c-check { width: 46px; }
.c-date { width: 184px; }
.c-grade { width: 468px; }
.c-rating { width: 418px; }
.c-value { width: 258px; }
.c-icf { width: 158px; }

th, td {
  padding: 0 0 0 12px;
  border-right: 2px solid #e0e0e0;
  border-bottom: 2px solid #e0e0e0;
  text-align: left;
  white-space: nowrap;
  overflow: hidden;
}

th:last-child, td:last-child {
  border-right: 0;
}

th {
  height: 54px;
  padding-left: 8px;
  font-weight: bold;
  font-size: 21px;
}

td {
  height: 44px;
  padding-bottom: 2px;
  font-size: 21px;
}

td.date {
  padding-left: 8px;
}

.th {
  display: flex;
  align-items: center;
  gap: 12px;
  padding-right: 10px;
}

.th span {
  flex: 1;
}

th.check {
  padding-left: 0;
}

th.check .th {
  justify-content: flex-end;
}

th.check span {
  display: none;
}

th.icf .th {
  padding-right: 0;
}

th.icf .sigma {
  margin-right: -8px;
}

th.check .sigma {
  margin-left: -8px;
}

.sigma {
  width: 14px;
  height: 16px;
}

.filter {
  width: 16px;
  height: 16px;
}

td.check {
  padding: 0 0 0 10px;
}

td.check input {
  appearance: none;
  display: block;
  width: 26px;
  height: 26px;
  border: 2px solid #a6a6a6;
}

.light {
  display: inline-block;
  width: 20px;
  height: 20px;
  margin: 0 14px 0 -2px;
  border: 2px solid #33402c;
  border-radius: 50%;
  vertical-align: -2px;
  background: linear-gradient(#2c7c1c, #35a81c 50%, #98e850);
}

.light.red {
  border-color: #54201c;
  background: linear-gradient(#a82020, #d02020 50%, #f07050);
}

.light.yellow {
  border-color: #6a5a1c;
  background: linear-gradient(#c8941c, #f0c01c 50%, #fbe850);
}

td.code {
  padding-bottom: 0;
  overflow: visible;
  color: #000;
}

/* Feld deckt die untere Zellenlinie ab */
.patch {
  position: relative;
  display: block;
  width: 98px;
  height: 44px;
  margin: 0 0 -2px -4px;
  padding: 9px 0 0 4px;
  background: #fefefe;
}

.selected td {
  background: #a3d2f8;
  border-color: #a9c8e4;
  color: #36546f;
}

tr:has(+ .selected) td {
  border-bottom-color: #a9c8e4;
}

.selected input {
  background: #cce6fd;
  border-color: #86a6c2;
}

.scroll {
  display: flex;
  height: 34px;
  margin-top: auto;
}

.scroll button {
  display: flex;
  align-items: center;
  justify-content: center;
  width: 34px;
  border: 2px solid #bababa;
}

.scroll svg {
  width: 8px;
  height: 14px;
}

.thumb {
  flex: 1;
  margin-right: 50px;
  border: 2px solid #bababa;
}
</style>
